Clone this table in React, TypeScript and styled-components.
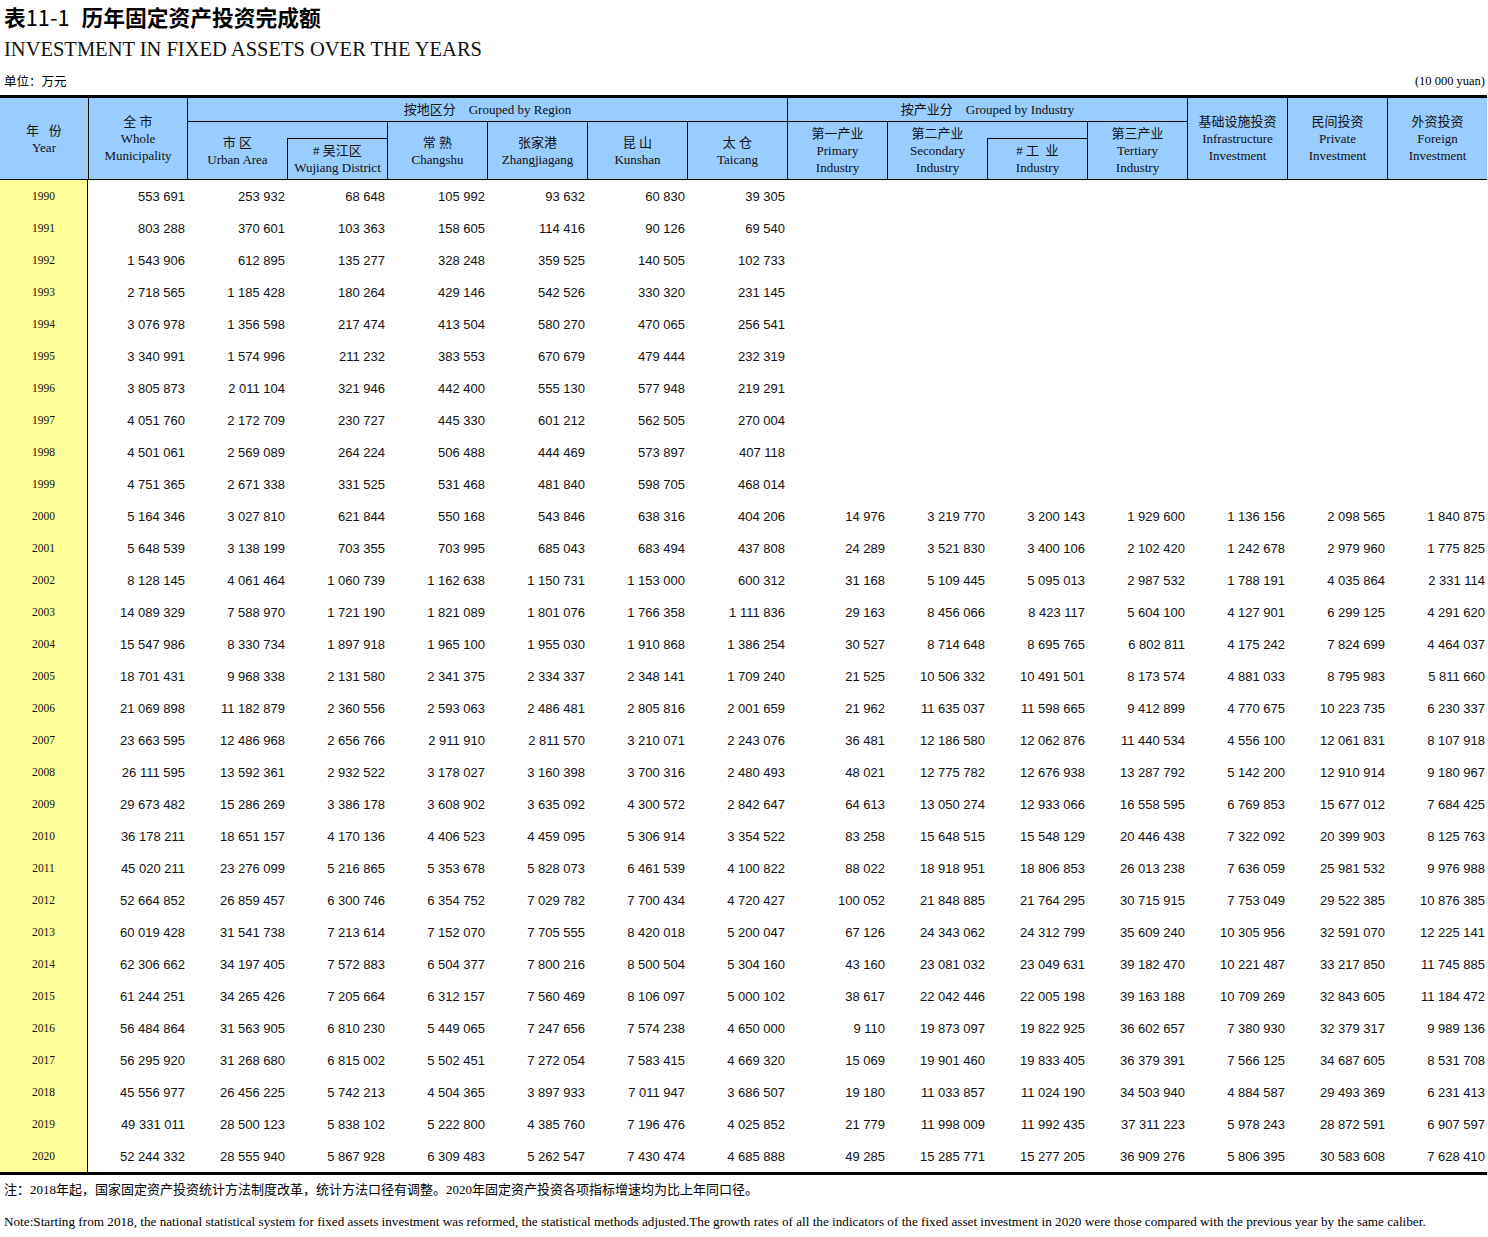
import React from 'react';
import styled, { createGlobalStyle } from 'styled-components';

const GlobalStyle = createGlobalStyle`
  * {
    box-sizing: border-box;
  }
  body {
    margin: 0;
    background: #ffffff;
    color: #000000;
  }
`;

const serif = `"Liberation Serif", "Noto Sans CJK SC", serif`;
const cjk = `"Noto Sans CJK SC", "Liberation Sans", sans-serif`;

const Page = styled.div`
  width: 1488px;
  display: flex;
  flex-direction: column;
`;

const Title = styled.div`
  height: 34px;
  line-height: 34px;
  padding-left: 4px;
  font-family: ${cjk};
  font-size: 21.75px;
  font-weight: 700;
  white-space: nowrap;
`;

const TitleNum = styled.span`
  font-weight: 400;
  margin-right: 12px;
`;

const SubTitle = styled.div`
  height: 30px;
  line-height: 30px;
  padding-left: 4px;
  font-family: ${serif};
  font-size: 20.5px;
  color: #111;
`;

const UnitRow = styled.div`
  height: 31px;
  padding: 9px 3px 6px 4px;
  display: flex;
  justify-content: space-between;
  align-items: center;
  line-height: 16px;
`;

const UnitCn = styled.span`
  font-family: ${cjk};
  font-size: 12.5px;
`;

const UnitEn = styled.span`
  font-family: ${serif};
  font-size: 12.5px;
`;

const Table = styled.table`
  width: 1487px;
  table-layout: fixed;
  border-collapse: separate;
  border-spacing: 0;
  border-top: 3px solid #000;
  border-bottom: 3px solid #000;
`;

const HeadRow = styled.tr<{ $h: number }>`
  height: ${({ $h }) => $h}px;
`;

const Th = styled.th<{ $noLeft?: boolean }>`
  padding: 0;
  background: #99ccff;
  border-left: ${({ $noLeft }) => ($noLeft ? 'none' : '1px solid #000')};
  border-bottom: 1px solid #000;
  font-family: ${serif};
  font-size: 13px;
  font-weight: 400;
  line-height: 17px;
  color: #111;
  text-align: center;
  vertical-align: middle;
  white-space: nowrap;
`;

const Line = styled.div`
  display: block;
`;

const BodyRow = styled.tr`
  height: 32px;
`;

const YearCell = styled.td`
  padding: 0;
  background: #ffff99;
  border-right: 1px solid #000;
  font-family: ${serif};
  font-size: 11.5px;
  text-align: center;
  vertical-align: middle;
  color: #111;
`;

const NumCell = styled.td`
  padding: 0 2px 0 0;
  font-family: "Liberation Sans", Arial, sans-serif;
  font-size: 13px;
  text-align: right;
  vertical-align: middle;
  color: #111;
  white-space: nowrap;
`;

const NoteCn = styled.div`
  margin-top: 7px;
  padding-left: 4px;
  line-height: 16px;
  font-family: ${serif};
  font-size: 13px;
  white-space: nowrap;
`;

const NoteEn = styled.div`
  margin-top: 16px;
  padding-left: 4px;
  line-height: 16px;
  font-family: ${serif};
  font-size: 13.2px;
  white-space: nowrap;
`;

const raw = `
1990,553 691,253 932,68 648,105 992,93 632,60 830,39 305
1991,803 288,370 601,103 363,158 605,114 416,90 126,69 540
1992,1 543 906,612 895,135 277,328 248,359 525,140 505,102 733
1993,2 718 565,1 185 428,180 264,429 146,542 526,330 320,231 145
1994,3 076 978,1 356 598,217 474,413 504,580 270,470 065,256 541
1995,3 340 991,1 574 996,211 232,383 553,670 679,479 444,232 319
1996,3 805 873,2 011 104,321 946,442 400,555 130,577 948,219 291
1997,4 051 760,2 172 709,230 727,445 330,601 212,562 505,270 004
1998,4 501 061,2 569 089,264 224,506 488,444 469,573 897,407 118
1999,4 751 365,2 671 338,331 525,531 468,481 840,598 705,468 014
2000,5 164 346,3 027 810,621 844,550 168,543 846,638 316,404 206,14 976,3 219 770,3 200 143,1 929 600,1 136 156,2 098 565,1 840 875
2001,5 648 539,3 138 199,703 355,703 995,685 043,683 494,437 808,24 289,3 521 830,3 400 106,2 102 420,1 242 678,2 979 960,1 775 825
2002,8 128 145,4 061 464,1 060 739,1 162 638,1 150 731,1 153 000,600 312,31 168,5 109 445,5 095 013,2 987 532,1 788 191,4 035 864,2 331 114
2003,14 089 329,7 588 970,1 721 190,1 821 089,1 801 076,1 766 358,1 111 836,29 163,8 456 066,8 423 117,5 604 100,4 127 901,6 299 125,4 291 620
2004,15 547 986,8 330 734,1 897 918,1 965 100,1 955 030,1 910 868,1 386 254,30 527,8 714 648,8 695 765,6 802 811,4 175 242,7 824 699,4 464 037
2005,18 701 431,9 968 338,2 131 580,2 341 375,2 334 337,2 348 141,1 709 240,21 525,10 506 332,10 491 501,8 173 574,4 881 033,8 795 983,5 811 660
2006,21 069 898,11 182 879,2 360 556,2 593 063,2 486 481,2 805 816,2 001 659,21 962,11 635 037,11 598 665,9 412 899,4 770 675,10 223 735,6 230 337
2007,23 663 595,12 486 968,2 656 766,2 911 910,2 811 570,3 210 071,2 243 076,36 481,12 186 580,12 062 876,11 440 534,4 556 100,12 061 831,8 107 918
2008,26 111 595,13 592 361,2 932 522,3 178 027,3 160 398,3 700 316,2 480 493,48 021,12 775 782,12 676 938,13 287 792,5 142 200,12 910 914,9 180 967
2009,29 673 482,15 286 269,3 386 178,3 608 902,3 635 092,4 300 572,2 842 647,64 613,13 050 274,12 933 066,16 558 595,6 769 853,15 677 012,7 684 425
2010,36 178 211,18 651 157,4 170 136,4 406 523,4 459 095,5 306 914,3 354 522,83 258,15 648 515,15 548 129,20 446 438,7 322 092,20 399 903,8 125 763
2011,45 020 211,23 276 099,5 216 865,5 353 678,5 828 073,6 461 539,4 100 822,88 022,18 918 951,18 806 853,26 013 238,7 636 059,25 981 532,9 976 988
2012,52 664 852,26 859 457,6 300 746,6 354 752,7 029 782,7 700 434,4 720 427,100 052,21 848 885,21 764 295,30 715 915,7 753 049,29 522 385,10 876 385
2013,60 019 428,31 541 738,7 213 614,7 152 070,7 705 555,8 420 018,5 200 047,67 126,24 343 062,24 312 799,35 609 240,10 305 956,32 591 070,12 225 141
2014,62 306 662,34 197 405,7 572 883,6 504 377,7 800 216,8 500 504,5 304 160,43 160,23 081 032,23 049 631,39 182 470,10 221 487,33 217 850,11 745 885
2015,61 244 251,34 265 426,7 205 664,6 312 157,7 560 469,8 106 097,5 000 102,38 617,22 042 446,22 005 198,39 163 188,10 709 269,32 843 605,11 184 472
2016,56 484 864,31 563 905,6 810 230,5 449 065,7 247 656,7 574 238,4 650 000,9 110,19 873 097,19 822 925,36 602 657,7 380 930,32 379 317,9 989 136
2017,56 295 920,31 268 680,6 815 002,5 502 451,7 272 054,7 583 415,4 669 320,15 069,19 901 460,19 833 405,36 379 391,7 566 125,34 687 605,8 531 708
2018,45 556 977,26 456 225,5 742 213,4 504 365,3 897 933,7 011 947,3 686 507,19 180,11 033 857,11 024 190,34 503 940,4 884 587,29 493 369,6 231 413
2019,49 331 011,28 500 123,5 838 102,5 222 800,4 385 760,7 196 476,4 025 852,21 779,11 998 009,11 992 435,37 311 223,5 978 243,28 872 591,6 907 597
2020,52 244 332,28 555 940,5 867 928,6 309 483,5 262 547,7 430 474,4 685 888,49 285,15 285 771,15 277 205,36 909 276,5 806 395,30 583 608,7 628 410
`;

const rows = raw
  .trim()
  .split('\n')
  .map((line) => line.split(','));

const colWidths = [88, 99, 100, 100, 100, 100, 100, 100, 100, 100, 100, 100, 100, 100, 100];

const Head = ({ lines }: { lines: string[] }) => (
  <>
    {lines.map((l, i) => (
      <Line key={i}>{l}</Line>
    ))}
  </>
);

export default function App() {
  return (
    <Page>
      <GlobalStyle />
      <Title>
        表<TitleNum>11-1</TitleNum>历年固定资产投资完成额
      </Title>
      <SubTitle>INVESTMENT IN FIXED ASSETS OVER THE YEARS</SubTitle>
      <UnitRow>
        <UnitCn>单位：万元</UnitCn>
        <UnitEn>(10 000 yuan)</UnitEn>
      </UnitRow>

      <Table>
        <colgroup>
          {colWidths.map((w, i) => (
            <col key={i} style={{ width: w }} />
          ))}
        </colgroup>
        <thead>
          <HeadRow $h={24}>
            <Th rowSpan={3} $noLeft>
              <Head lines={['年\u2002 份', 'Year']} />
            </Th>
            <Th rowSpan={3}>
              <Head lines={['全 市', 'Whole', 'Municipality']} />
            </Th>
            <Th colSpan={6}>按地区分{'\u2002\u2002'}Grouped by Region</Th>
            <Th colSpan={4}>按产业分{'\u2002\u2002'}Grouped by Industry</Th>
            <Th rowSpan={3}>
              <Head lines={['基础设施投资', 'Infrastructure', 'Investment']} />
            </Th>
            <Th rowSpan={3}>
              <Head lines={['民间投资', 'Private', 'Investment']} />
            </Th>
            <Th rowSpan={3}>
              <Head lines={['外资投资', 'Foreign', 'Investment']} />
            </Th>
          </HeadRow>
          <HeadRow $h={17}>
            <Th rowSpan={2}>
              <Head lines={['市 区', 'Urban Area']} />
            </Th>
            <Th $noLeft />
            <Th rowSpan={2}>
              <Head lines={['常 熟', 'Changshu']} />
            </Th>
            <Th rowSpan={2}>
              <Head lines={['张家港', 'Zhangjiagang']} />
            </Th>
            <Th rowSpan={2}>
              <Head lines={['昆 山', 'Kunshan']} />
            </Th>
            <Th rowSpan={2}>
              <Head lines={['太 仓', 'Taicang']} />
            </Th>
            <Th rowSpan={2}>
              <Head lines={['第一产业', 'Primary', 'Industry']} />
            </Th>
            <Th rowSpan={2}>
              <Head lines={['第二产业', 'Secondary', 'Industry']} />
            </Th>
            <Th $noLeft />
            <Th rowSpan={2}>
              <Head lines={['第三产业', 'Tertiary', 'Industry']} />
            </Th>
          </HeadRow>
          <HeadRow $h={41}>
            <Th>
              <Head lines={['# 吴江区', 'Wujiang District']} />
            </Th>
            <Th>
              <Head lines={['# 工\u2002业', 'Industry']} />
            </Th>
          </HeadRow>
        </thead>
        <tbody>
          {rows.map((r) => (
            <BodyRow key={r[0]}>
              <YearCell>{r[0]}</YearCell>
              {Array.from({ length: 14 }, (_, i) => (
                <NumCell key={i}>{r[i + 1] ?? ''}</NumCell>
              ))}
            </BodyRow>
          ))}
        </tbody>
      </Table>

      <NoteCn>
        注：2018年起，国家固定资产投资统计方法制度改革，统计方法口径有调整。2020年固定资产投资各项指标增速均为比上年同口径。
      </NoteCn>
      <NoteEn>
        Note:Starting from 2018, the national statistical system for fixed assets investment was reformed, the statistical methods adjusted.The growth rates of all the indicators of the fixed asset investment in 2020 were those compared with the previous year by the same caliber.
      </NoteEn>
    </Page>
  );
}
